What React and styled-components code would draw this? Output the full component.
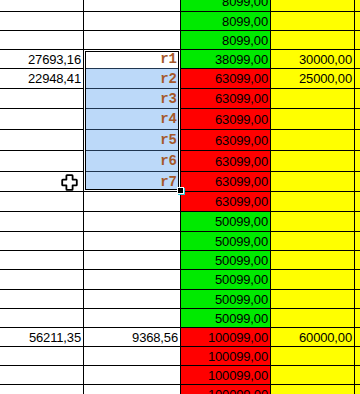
import React from "react";
import styled, { createGlobalStyle } from "styled-components";

const GlobalStyle = createGlobalStyle`
  html, body { margin: 0; padding: 0; background: #fff; }
  body { font-family: "Liberation Sans", Arial, sans-serif; }
`;

const fills = {
  none: "#ffffff",
  green: "#00ea00",
  red: "#ff0000",
  yellow: "#ffff00",
  sel: "#bcd9f9",
};

const Viewport = styled.div`
  position: relative;
  width: 360px;
  height: 394px;
  overflow: hidden;
  background: #fff;
`;

/* the sheet is scrolled a few pixels, so the first row is cut at the top */
const Sheet = styled.div`
  display: flex;
  flex-direction: column;
  margin-top: -8px;
`;

const Row = styled.div`
  display: grid;
  grid-template-columns: 84px 97px 90px 84px 1fr;
  height: ${(p) => p.$h}px;
`;

const Cell = styled.div`
  box-sizing: border-box;
  display: flex;
  align-items: center;
  justify-content: flex-end;
  padding-right: 2px;
  border-right: ${(p) => (p.$last ? "none" : "1px solid #000")};
  border-bottom: 1px solid ${(p) => p.$line || "#000"};
  background: ${(p) => fills[p.$fill || "none"]};
  font-family: "Liberation Sans", Arial, sans-serif;
  font-size: 13px;
  letter-spacing: -0.15px;
  color: #000;
  white-space: nowrap;
  overflow: hidden;
`;

const Code = styled.span`
  font-family: "Liberation Mono", "Courier New", monospace;
  font-weight: bold;
  font-size: 14px;
  letter-spacing: 0;
  color: #a5582a;
  padding-right: 1px;
`;

/* selection marquee over the r1..r7 range */
const Selection = styled.div`
  position: absolute;
  left: 83px;
  top: 49px;
  width: 98px;
  height: 143px;
  box-sizing: border-box;
  border: 1px solid #000;
  box-shadow: inset 0 0 0 1px #fff, inset 0 0 0 2px #000;
  pointer-events: none;
`;

const FillHandle = styled.div`
  position: absolute;
  left: 178px;
  top: 188px;
  width: 5px;
  height: 5px;
  background: #000;
  box-shadow: 0 0 0 1px #fff, 1px 1px 0 1px #28c8d8;
`;

const Cursor = styled.svg`
  position: absolute;
  left: 61px;
  top: 174px;
  width: 17px;
  height: 17px;
  pointer-events: none;
`;

const rows = [
  { h: 20, c: "8099,00", cf: "green" },
  { h: 19, c: "8099,00", cf: "green" },
  { h: 19, c: "8099,00", cf: "green" },
  { h: 19, a: "27693,16", b: "r1", bf: "none", bl: "#1f3550", c: "38099,00", cf: "green", d: "30000,00" },
  { h: 20, a: "22948,41", b: "r2", bf: "sel", bl: "#1f3550", c: "63099,00", cf: "red", d: "25000,00" },
  { h: 20, b: "r3", bf: "sel", bl: "#1f3550", c: "63099,00", cf: "red" },
  { h: 21, b: "r4", bf: "sel", bl: "#1f3550", c: "63099,00", cf: "red" },
  { h: 21, b: "r5", bf: "sel", bl: "#1f3550", c: "63099,00", cf: "red" },
  { h: 21, b: "r6", bf: "sel", bl: "#1f3550", c: "63099,00", cf: "red" },
  { h: 20, b: "r7", bf: "sel", c: "63099,00", cf: "red" },
  { h: 20, c: "63099,00", cf: "red" },
  { h: 20, c: "50099,00", cf: "green" },
  { h: 19, c: "50099,00", cf: "green" },
  { h: 19, c: "50099,00", cf: "green" },
  { h: 20, c: "50099,00", cf: "green" },
  { h: 19, c: "50099,00", cf: "green" },
  { h: 19, c: "50099,00", cf: "green" },
  { h: 19, a: "56211,35", b: "9368,56", c: "100099,00", cf: "red", d: "60000,00" },
  { h: 19, c: "100099,00", cf: "red" },
  { h: 19, c: "100099,00", cf: "red" },
  { h: 20, c: "100099,00", cf: "red" },
];

const isCode = (v) => typeof v === "string" && /^r\d$/.test(v);

export default function App() {
  return (
    <>
      <GlobalStyle />
      <Viewport>
        <Sheet>
          {rows.map((r, i) => (
            <Row key={i} $h={r.h}>
              <Cell>{r.a}</Cell>
              <Cell $fill={r.bf} $line={r.bl}>
                {isCode(r.b) ? <Code>{r.b}</Code> : r.b}
              </Cell>
              <Cell $fill={r.cf}>{r.c}</Cell>
              <Cell $fill="yellow">{r.d}</Cell>
              <Cell $fill="yellow" $last />
            </Row>
          ))}
        </Sheet>
        <Selection />
        <FillHandle />
        <Cursor viewBox="0 0 17 17">
          <path
            d="M6 1.2 H11 Q11.6 1.2 11.6 1.8 V5.6 H15.2 Q15.8 5.6 15.8 6.2 V10.8 Q15.8 11.4 15.2 11.4 H11.6 V15.2 Q11.6 15.8 11 15.8 H6 Q5.4 15.8 5.4 15.2 V11.4 H1.8 Q1.2 11.4 1.2 10.8 V6.2 Q1.2 5.6 1.8 5.6 H5.4 V1.8 Q5.4 1.2 6 1.2 Z"
            fill="#fff"
            stroke="#000"
            strokeWidth="1.8"
            strokeLinejoin="round"
          />
        </Cursor>
      </Viewport>
    </>
  );
}
